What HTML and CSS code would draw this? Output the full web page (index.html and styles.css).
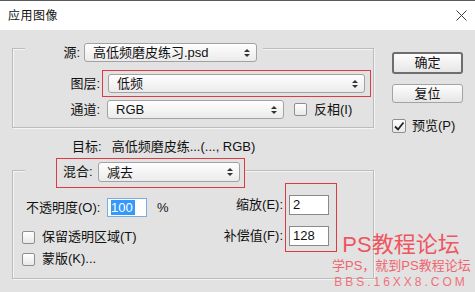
FILE: index.html
```html
<!DOCTYPE html>
<html lang="zh-CN">
<head>
    <meta charset="UTF-8">
    <meta name="viewport" content="width=device-width, initial-scale=1.0">
    <title>应用图像</title>
    <link rel="stylesheet" href="styles.css">
</head>
<body>
    <div class="dialog">
        <div class="titlebar">
            <span class="title">应用图像</span>
            <svg class="close" width="11" height="11" viewBox="0 0 11 11">
                <path d="M0.5 0.5 L10.5 10.5 M10.5 0.5 L0.5 10.5" stroke="#3a3a3a" stroke-width="1" fill="none"/>
            </svg>
        </div>
        <div class="content">
            <div class="main">
                <div class="group group-source">
                    <div class="legend legend-source">
                        <span class="label">源:</span>
                        <div class="popup popup-source">高低频磨皮练习.psd<span class="spin"></span></div>
                    </div>
                    <div class="row row-layer">
                        <span class="label label-col">图层:</span>
                        <div class="mark mark-layer">
                            <div class="popup popup-layer">低频<span class="spin"></span></div>
                        </div>
                    </div>
                    <div class="row row-channel">
                        <span class="label label-col">通道:</span>
                        <div class="popup popup-channel">RGB<span class="spin"></span></div>
                        <span class="check check-invert"><span class="box"></span>反相(I)</span>
                    </div>
                </div>

                <div class="target"><span>目标:</span><span class="target-name">高低频磨皮练...(..., RGB)</span></div>

                <div class="group group-blend">
                    <div class="legend legend-blend">
                        <div class="mark mark-blend">
                            <span class="label label-blend">混合:</span>
                            <div class="popup popup-blend">减去<span class="spin"></span></div>
                        </div>
                    </div>
                    <div class="blend-body">
                        <div class="blend-left">
                            <div class="opacity-row">
                                <span class="label label-opacity">不透明度(O):</span>
                                <span class="field field-focus"><span class="selected">100</span></span>
                                <span class="percent">%</span>
                            </div>
                            <span class="check check-row"><span class="box"></span>保留透明区域(T)</span>
                            <span class="check check-row check-mask"><span class="box"></span>蒙版(K)...</span>
                        </div>
                        <div class="blend-right">
                            <div class="value-labels">
                                <span>缩放(E):</span>
                                <span>补偿值(F):</span>
                            </div>
                            <div class="mark mark-values">
                                <span class="field">2</span>
                                <span class="field">128</span>
                            </div>
                        </div>
                    </div>
                </div>
            </div>

            <div class="side">
                <div class="btn btn-ok">确定</div>
                <div class="btn btn-reset">复位</div>
                <span class="check check-preview"><span class="box checked">
                    <svg width="12" height="12" viewBox="0 0 12 12"><path d="M2 6.5 L5 9.5 L10.5 2.5" stroke="#222" stroke-width="1.8" fill="none"/></svg>
                </span>预览(P)</span>
            </div>
        </div>

        <div class="watermark">
            <div class="wm-title">PS教程论坛</div>
            <div class="wm-slogan">学PS，就到PS教程论坛</div>
            <div class="wm-url">BBS.16XX8.COM</div>
        </div>
    </div>
</body>
</html>
```

FILE: styles.css
```css
body {
    margin: 0;
    background: #e2e2e2;
    font-family: "Liberation Sans", "Noto Sans CJK SC", sans-serif;
    font-size: 13px;
    color: #111;
}
.dialog {
    position: relative;
    width: 475px;
    height: 292px;
    background: #e2e2e2;
    overflow: hidden;
}
.titlebar {
    height: 30px;
    box-sizing: border-box;
    border-top: 1px solid #5a5a5a;
    background: #fff;
    display: flex;
    align-items: center;
    justify-content: space-between;
    padding: 0 8px 0 8px;
}
.title {
    font-size: 12px;
    letter-spacing: 0.5px;
    line-height: 16px;
}
.close { margin-right: 0; }

.content {
    display: flex;
    padding-left: 12px;
}
.main { width: 362px; }

.group {
    box-sizing: border-box;
    border: 1px solid #bcbcbc;
    box-shadow: inset 1px 1px 0 #f4f4f4, 1px 1px 0 #f4f4f4;
}
.group-source {
    margin-top: 18px;
    height: 80px;
}
.legend {
    background: #e2e2e2;
    box-sizing: border-box;
}
.legend-source {
    margin: -6px 0 0 12px;
    width: 238px;
    height: 19px;
    padding-right: 6px;
    display: flex;
    justify-content: flex-end;
    align-items: center;
}
.legend-source .label { margin-right: 4px; }
.label { line-height: 19px; white-space: nowrap; }

.popup {
    box-sizing: border-box;
    height: 19px;
    border: 1px solid #a2a2a2;
    border-radius: 3px;
    background: linear-gradient(#fefefe, #ebebeb);
    display: flex;
    align-items: center;
    justify-content: space-between;
    padding: 0 6px 0 8px;
    line-height: 17px;
    white-space: nowrap;
}
.spin {
    display: flex;
    flex-direction: column;
    gap: 2px;
}
.spin::before, .spin::after {
    content: "";
    border-left: 3px solid transparent;
    border-right: 3px solid transparent;
}
.spin::before { border-bottom: 3px solid #333; }
.spin::after { border-top: 3px solid #333; }

.popup-source { width: 173px; }

.mark {
    box-sizing: border-box;
    border: 1px solid #dd3a44;
}

.row {
    display: flex;
    align-items: center;
}
.label-col {
    width: 89px;
    box-sizing: border-box;
    text-align: right;
    padding-right: 2px;
}
.row-layer { margin-top: 8px; }
.mark-layer {
    width: 269px;
    padding: 3px 5px;
}
.popup-layer { width: 257px; }
.row-channel { margin-top: 3px; }
.popup-channel {
    width: 177px;
    margin-left: 5px;
}

.check {
    display: flex;
    align-items: center;
    gap: 7px;
    line-height: 18px;
    white-space: nowrap;
}
.box {
    width: 13px;
    height: 13px;
    box-sizing: border-box;
    border: 1px solid #8e8e8e;
    border-radius: 2px;
    background: linear-gradient(#ffffff, #e8e8e8);
    display: flex;
    align-items: center;
    justify-content: center;
}
.check-invert { margin-left: 10px; }

.target {
    margin-top: 11px;
    height: 16px;
    line-height: 16px;
    padding-left: 60px;
}
.target-name { margin-left: 10px; }

.group-blend {
    margin-top: 15px;
    height: 109px;
}
.legend-blend {
    margin: -13px 0 -5px 12px;
    width: 220px;
    height: 30px;
    padding-left: 31px;
}
.mark-blend {
    height: 30px;
    padding: 3px 4px 5px 6px;
    display: flex;
}
.label-blend {
    width: 35px;
    line-height: 20px;
}
.popup-blend {
    width: 142px;
    height: 20px;
}

.blend-body { display: flex; }
.blend-left {
    flex: 1;
    padding-top: 15px;
}
.opacity-row {
    display: flex;
    align-items: center;
    height: 19px;
    padding-left: 13px;
}
.label-opacity { width: 81px; }
.field {
    box-sizing: border-box;
    width: 40px;
    height: 20px;
    border: 1px solid #8a8a8a;
    background: #fff;
    padding-left: 3px;
    line-height: 18px;
    display: block;
}
.field-focus {
    height: 19px;
    border-color: #7aaee0;
    line-height: 17px;
}
.selected {
    background: #3399ff;
    color: #fff;
    padding-right: 2px;
}
.percent { margin-left: 10px; }
.check-row {
    margin-top: 10px;
    height: 20px;
    padding-left: 9px;
}
.check-mask { margin-top: 2px; }

.blend-right {
    display: flex;
    margin-right: 36px;
}
.value-labels {
    display: flex;
    flex-direction: column;
    gap: 11px;
    padding-top: 12px;
    margin-right: 2px;
    text-align: right;
    line-height: 20px;
}
.mark-values {
    width: 52px;
    height: 69px;
    padding: 11px 7px 5px 3px;
    display: flex;
    flex-direction: column;
    gap: 11px;
}

.side {
    width: 71px;
    margin-left: 18px;
    padding-top: 22px;
}
.btn {
    box-sizing: border-box;
    text-align: center;
    border-radius: 3px;
    background: linear-gradient(#fdfdfd, #e6e6e6);
}
.btn-ok {
    height: 22px;
    border: 2px solid #6e6e6e;
    line-height: 18px;
}
.btn-reset {
    margin-top: 10px;
    height: 19px;
    border: 1px solid #a3a3a3;
    line-height: 17px;
}
.check-preview {
    margin-top: 14px;
    gap: 6px;
}
.check-preview .box {
    width: 14px;
    height: 14px;
}

.watermark {
    position: absolute;
    left: 332px;
    top: 232px;
    width: 138px;
    text-align: center;
    color: #ef5560;
    white-space: nowrap;
}
.wm-title {
    font-size: 22px;
    line-height: 26px;
}
.wm-slogan {
    font-size: 13px;
    line-height: 16px;
    color: #f06470;
}
.wm-url {
    font-size: 12px;
    line-height: 16px;
    letter-spacing: 3px;
    color: #f2707a;
}
```
